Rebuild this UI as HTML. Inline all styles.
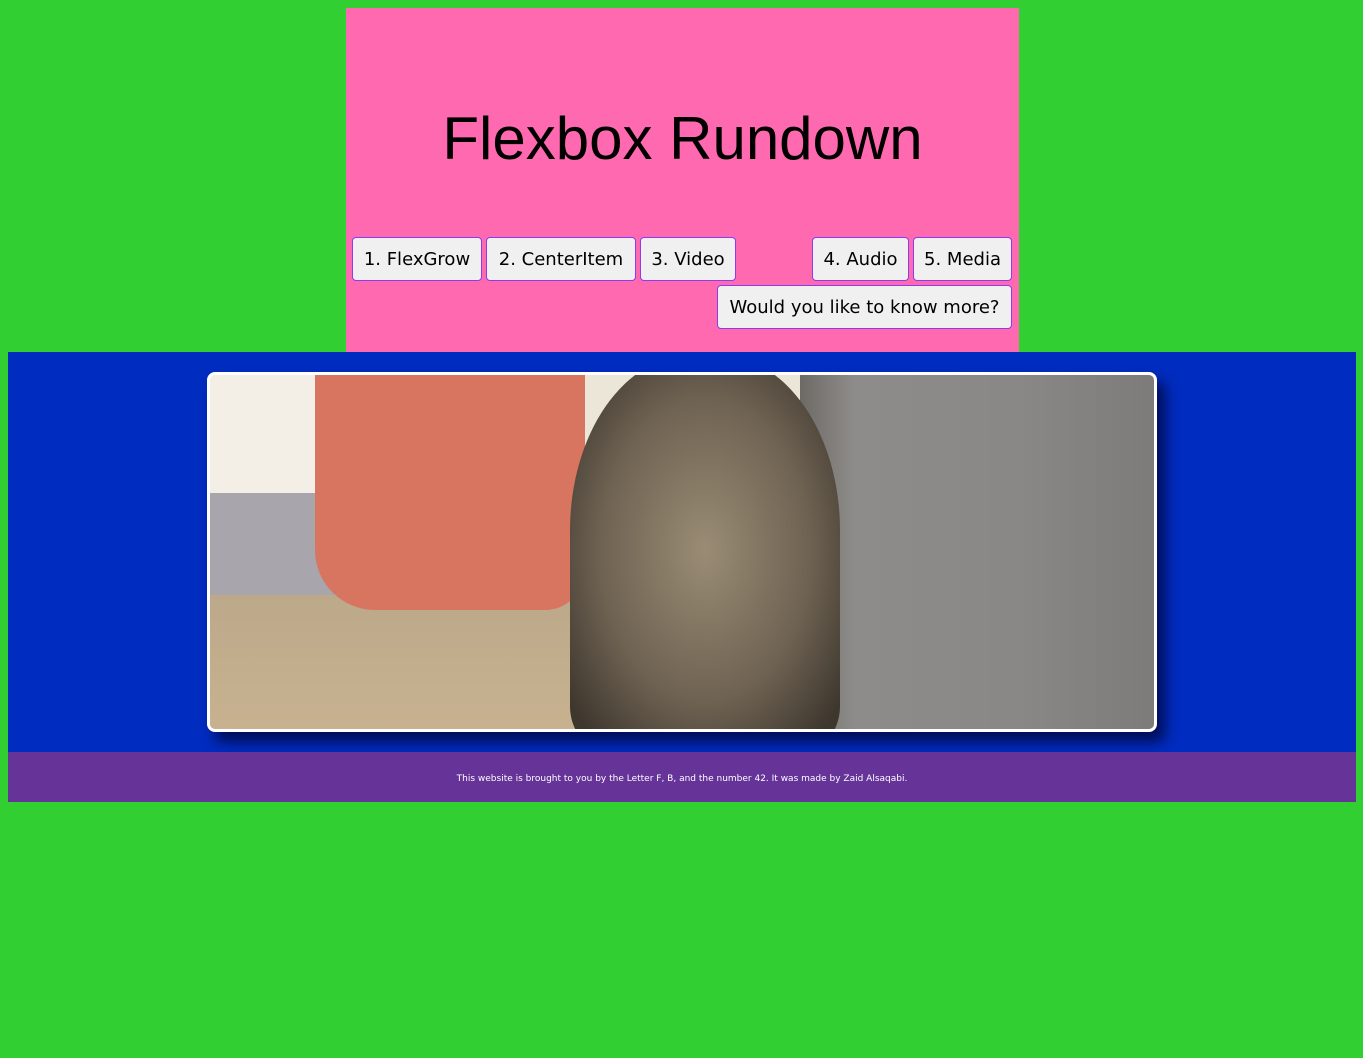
<!DOCTYPE html>
<html><head><style>
*{margin:0;padding:0;box-sizing:border-box}
body{width:1363px;height:1058px;background:#32cf32;position:relative;overflow:hidden;font-family:"DejaVu Sans","Liberation Sans",sans-serif}
.hdr{position:absolute;left:346px;top:8px;width:673px;height:344px;background:#ff69b0}
h1{position:absolute;left:0;width:673px;top:96px;text-align:center;font:normal 60px "Liberation Sans",sans-serif;color:#000}
.b{position:absolute;height:44px;top:229px;background:#f0f0f0;border:1px solid #8a3cf0;border-radius:4px;font-size:18px;color:#000;line-height:44px;text-align:center}
.main{position:absolute;left:8px;top:352px;width:1348px;height:400px;background:#002cc0}
.img{position:absolute;left:207px;top:372px;width:950px;height:360px;border:3px solid #fff;border-radius:8px;overflow:hidden;box-shadow:8px 10px 14px rgba(0,0,40,.7);background:#ece6d8}
.img div{position:absolute}
.ft{position:absolute;left:8px;top:752px;width:1348px;height:50px;background:#663399;color:#fff;font-size:9px;text-align:center;line-height:55px}
</style></head><body>
<div class="hdr"><h1>Flexbox Rundown</h1>
<div class="b" style="left:6px;width:130px">1. FlexGrow</div>
<div class="b" style="left:140px;width:150px">2. CenterItem</div>
<div class="b" style="left:294px;width:96px">3. Video</div>
<div class="b" style="left:466px;width:97px">4. Audio</div>
<div class="b" style="left:567px;width:99px">5. Media</div>
<div class="b" style="left:371px;width:295px;top:277px">Would you like to know more?</div>
</div>
<div class="main"></div>
<div class="img">
<div style="left:0;top:0;width:130px;height:120px;background:#f3efe6"></div>
<div style="left:0;top:118px;width:160px;height:110px;background:#a8a6ac"></div>
<div style="left:0;top:220px;width:600px;height:140px;background:linear-gradient(#bca98a,#c8b290)"></div>
<div style="left:105px;top:-10px;width:270px;height:245px;background:#d87560;border-radius:0 0 40px 60px"></div>
<div style="left:590px;top:0;width:360px;height:360px;background:linear-gradient(90deg,#6d6a66,#8e8c8a 15%,#8a8886 60%,#7d7b79)"></div>
<div style="left:360px;top:-20px;width:270px;height:390px;background:radial-gradient(ellipse at 50% 50%,#9a8c74,#6e6252 55%,#3e372e 90%);border-radius:45% 45% 10% 10%"></div>
</div>
<div class="ft">This website is brought to you by the Letter F, B, and the number 42. It was made by Zaid Alsaqabi.</div>
</body></html>
